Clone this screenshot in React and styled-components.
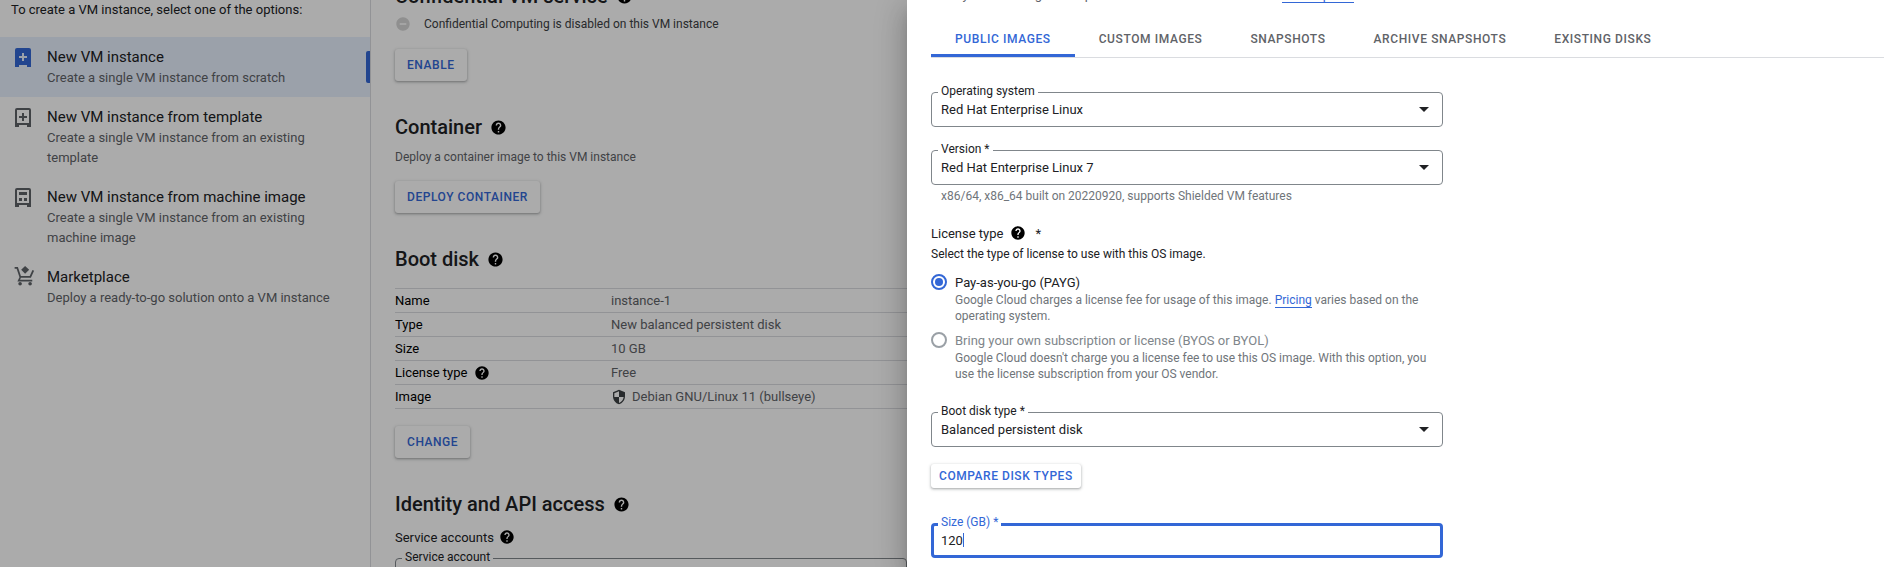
import React from "react"
import styled, { createGlobalStyle } from "styled-components"
import { MdHelp, MdRemoveCircle, MdSecurity } from "react-icons/md"

const BLUE = "#3367d6"
const INK = "#202124"
const GREY = "#5f6368"

const GlobalStyle = createGlobalStyle`
	html, body {
		margin: 0;
		height: 100%;
		overflow: hidden;
		background: #fff;
	}
	body {
		font-family: Roboto, "Liberation Sans", sans-serif;
		font-size: 12px;
		color: ${INK};
	}
	* {
		box-sizing: border-box;
	}
`

const Page = styled.div`
	display: flex;
	width: 1902px;
	height: 567px;
	overflow: hidden;
`

const Backdrop = styled.div`
	position: relative;
	display: flex;
	flex: 0 0 907px;
	height: 100%;
	background: #fff;
`

const Scrim = styled.div`
	position: absolute;
	inset: 0;
	background: rgba(0, 0, 0, 0.33);
`

const Sidebar = styled.aside`
	flex: 0 0 371px;
	border-right: 1px solid #dadce0;
`

const SidebarIntro = styled.div`
	height: 37px;
	padding-left: 11px;
	font-size: 13px;
	line-height: 20px;
`

const Option = styled.div`
	position: relative;
	display: flex;
	padding: 10px 36px 10px 15px;
	background: ${p => (p.$active ? "#e8f0fe" : "transparent")};
`

const OptionIcon = styled.svg`
	flex: 0 0 32px;
	width: 32px;
	height: 20px;
	margin-top: ${p => p.$top || 1}px;
	fill: ${p => (p.$active ? BLUE : GREY)};
	overflow: visible;
`

const OptionBody = styled.div`
	flex: 1;
`

const OptionTitle = styled.div`
	font-size: 15px;
	line-height: 20px;
`

const OptionText = styled.div`
	padding-top: 1px;
	margin-bottom: -1px;
	font-size: 13px;
	line-height: 20px;
	color: ${GREY};
`

const ActiveBar = styled.span`
	position: absolute;
	right: 0;
	top: 14px;
	width: 4px;
	height: 32px;
	border-radius: 2px 0 0 2px;
	background: ${BLUE};
`

const Main = styled.main`
	flex: 1;
	min-width: 0;
	height: 100%;
	padding-left: 24px;
	overflow: hidden;
`

// the column is scrolled, its first heading is cut by the window
const MainScroll = styled.div`
	margin-top: -16px;
`

const Heading = styled.h2`
	display: flex;
	align-items: center;
	gap: 8px;
	height: 24px;
	margin: ${p => p.$top || 0}px 0 0;
	font-size: 20px;
	font-weight: 500;
	line-height: 24px;
	color: ${INK};
`

const StatusRow = styled.div`
	display: flex;
	align-items: center;
	gap: 13px;
	height: 20px;
	margin-top: 6px;
	color: #3c4043;
`

const MutedLine = styled.div`
	margin-top: 8px;
	line-height: 20px;
	color: ${GREY};
`

const RaisedButton = styled.button`
	display: block;
	height: ${p => p.$height || 32}px;
	margin-top: ${p => p.$top || 0}px;
	padding: 0 ${p => p.$pad || 12}px;
	border: 0;
	border-radius: 3px;
	background: #fff;
	box-shadow: 0 1px 2px rgba(60, 64, 67, 0.3), 0 1px 3px 1px rgba(60, 64, 67, 0.15);
	font: 500 12px Roboto, sans-serif;
	letter-spacing: 0.55px;
	color: ${BLUE};
`

const SummaryTable = styled.div`
	margin-top: 17px;
	border-top: 1px solid #dadce0;
`

const SummaryRow = styled.div`
	display: grid;
	grid-template-columns: 216px 1fr;
	align-items: center;
	height: 24px;
	border-bottom: 1px solid #dadce0;
	font-size: 13px;
`

const SummaryKey = styled.div`
	display: flex;
	align-items: center;
	gap: 7px;
	color: #000;
`

const SummaryValue = styled.div`
	display: flex;
	align-items: center;
	gap: 5px;
	color: ${GREY};
`

const SubLabel = styled.div`
	display: flex;
	align-items: center;
	gap: 5px;
	height: 20px;
	margin-top: 11px;
	font-size: 13px;
	color: ${INK};
`

const Panel = styled.section`
	position: relative;
	flex: 1;
	height: 100%;
	padding-left: 24px;
	overflow: hidden;
	background: #fff;
	box-shadow: 0 8px 10px -5px rgba(0, 0, 0, 0.2), 0 16px 24px 2px rgba(0, 0, 0, 0.14), 0 6px 30px 5px rgba(0, 0, 0, 0.12);
`

const PanelScroll = styled.div`
	width: 953px;
	margin-top: -15px;
`

const Intro = styled.div`
	font-size: 13px;
	line-height: 20px;
	color: ${GREY};
`

const IntroLink = styled.a`
	color: ${BLUE};
	border-bottom: 1px solid ${BLUE};
`

const Tabs = styled.div`
	display: flex;
	height: 39px;
	margin-top: 14px;
	border-bottom: 1px solid #dadce0;
`

const Tab = styled.div`
	display: flex;
	align-items: center;
	height: 38px;
	padding: 4px 24px 0;
	border-bottom: 3px solid ${p => (p.$active ? BLUE : "transparent")};
	font-weight: 500;
	letter-spacing: 0.6px;
	color: ${p => (p.$active ? BLUE : GREY)};
`

const FieldBox = styled.div`
	position: relative;
	display: flex;
	align-items: center;
	justify-content: space-between;
	width: 512px;
	height: 35px;
	margin-top: ${p => p.$top || 0}px;
	padding: 0 13px 0 ${p => (p.$focused ? 7 : 9)}px;
	border: ${p => (p.$focused ? `3px solid ${BLUE}` : "1px solid #80868b")};
	border-radius: 4px;
	font-size: 13px;
	color: ${INK};
`

const FieldLabel = styled.label`
	position: absolute;
	top: ${p => (p.$focused ? -11 : -9)}px;
	left: ${p => (p.$focused ? 4 : 6)}px;
	padding: 0 3px;
	background: #fff;
	font-size: 12px;
	line-height: 14px;
	color: ${p => (p.$focused ? BLUE : INK)};
`

const Arrow = styled.span`
	width: 0;
	height: 0;
	border: 5px solid transparent;
	border-top-color: #202124;
	border-bottom: 0;
`

const Caret = styled.span`
	display: inline-block;
	width: 1px;
	height: 14px;
	vertical-align: -2px;
	background: ${BLUE};
`

const Hint = styled.div`
	margin-top: 3px;
	padding-left: 10px;
	line-height: 16px;
	color: #70757a;
`

const GroupTitle = styled.div`
	display: flex;
	align-items: center;
	gap: 7px;
	height: 20px;
	margin-top: 19px;
	font-size: 13px;
`

const GroupText = styled.div`
	margin-top: 1px;
	line-height: 20px;
`

const RadioRow = styled.div`
	display: flex;
	align-items: center;
	gap: 8px;
	width: 512px;
	height: 20px;
	margin-top: ${p => p.$top}px;
	font-size: 13px;
	color: ${p => (p.$disabled ? "#80868b" : INK)};
`

const RadioMark = styled.span`
	display: flex;
	align-items: center;
	justify-content: center;
	width: 16px;
	height: 16px;
	border: 2px solid ${p => (p.$checked ? BLUE : "#9aa0a6")};
	border-radius: 50%;

	&::after {
		content: "";
		width: 8px;
		height: 8px;
		border-radius: 50%;
		background: ${p => (p.$checked ? BLUE : "transparent")};
	}
`

const RadioText = styled.div`
	width: 511px;
	padding-left: 24px;
	line-height: 16px;
	color: #70757a;
`

const RadioLink = styled.a`
	color: ${BLUE};
	border-bottom: 1px solid ${BLUE};
`

const Required = styled.span`
	margin-left: 2px;
`

const NewInstanceIcon = ({ active }) => (
	<OptionIcon viewBox="0 0 32 20" $active={active}>
		<path d="M2 0h12a2 2 0 0 1 2 2v17h-4v-2H4v2H0V2a2 2 0 0 1 2-2zM7 5v3H4v2h3v3h2v-3h3V8H9V5z" fillRule="evenodd" />
	</OptionIcon>
)

const TemplateIcon = () => (
	<OptionIcon viewBox="0 0 32 20">
		<path d="M2 0h12a2 2 0 0 1 2 2v17h-4v-2H4v2H0V2a2 2 0 0 1 2-2zm0 2v13h12V2zM7 5h2v3h3v2H9v3H7v-3H4V8h3z" fillRule="evenodd" />
	</OptionIcon>
)

const MachineImageIcon = () => (
	<OptionIcon viewBox="0 0 32 20">
		<path d="M2 0h12a2 2 0 0 1 2 2v17h-4v-2H4v2H0V2a2 2 0 0 1 2-2zm0 2v13h12V2zM4 4h8v3H4zM4 10h3v3H4zM9 10h3v3H9z" fillRule="evenodd" />
	</OptionIcon>
)

const MarketIcon = () => (
	<OptionIcon viewBox="0 0 32 22" $top={-1}>
		<path d="M-2 1h3.600l3.300 10h9.700l3-6.500 1.800.8-3.500 7.700H4.900l-.9 2h13.400v2H1l2.300-4.600L.2 3H-2zM9.500 0l4.500 4-4.500 4.500L5.200 4z" />
		<circle cx="4" cy="19.500" r="2" />
		<circle cx="15" cy="19.500" r="2" />
	</OptionIcon>
)

const App = () => (
	<Page>
		<GlobalStyle />
		<Backdrop>
			<Sidebar>
				<SidebarIntro>To create a VM instance, select one of the options:</SidebarIntro>
				<Option $active>
					<NewInstanceIcon active />
					<OptionBody>
						<OptionTitle>New VM instance</OptionTitle>
						<OptionText>Create a single VM instance from scratch</OptionText>
					</OptionBody>
					<ActiveBar />
				</Option>
				<Option>
					<TemplateIcon />
					<OptionBody>
						<OptionTitle>New VM instance from template</OptionTitle>
						<OptionText>Create a single VM instance from an existing template</OptionText>
					</OptionBody>
				</Option>
				<Option>
					<MachineImageIcon />
					<OptionBody>
						<OptionTitle>New VM instance from machine image</OptionTitle>
						<OptionText>Create a single VM instance from an existing machine image</OptionText>
					</OptionBody>
				</Option>
				<Option>
					<MarketIcon />
					<OptionBody>
						<OptionTitle>Marketplace</OptionTitle>
						<OptionText>Deploy a ready-to-go solution onto a VM instance</OptionText>
					</OptionBody>
				</Option>
			</Sidebar>
			<Main>
				<MainScroll>
					<Heading>
						Confidential VM service <MdHelp size={17} color="#000" />
					</Heading>
					<StatusRow>
						<MdRemoveCircle size={16} color="#d5d5d5" />
						Confidential Computing is disabled on this VM instance
					</StatusRow>
					<RaisedButton $top={15}>ENABLE</RaisedButton>
					<Heading $top={34}>
						Container <MdHelp size={17} color="#000" />
					</Heading>
					<MutedLine>Deploy a container image to this VM instance</MutedLine>
					<RaisedButton $top={14}>DEPLOY CONTAINER</RaisedButton>
					<Heading $top={34}>
						Boot disk <MdHelp size={17} color="#000" />
					</Heading>
					<SummaryTable>
						<SummaryRow>
							<SummaryKey>Name</SummaryKey>
							<SummaryValue>instance-1</SummaryValue>
						</SummaryRow>
						<SummaryRow>
							<SummaryKey>Type</SummaryKey>
							<SummaryValue>New balanced persistent disk</SummaryValue>
						</SummaryRow>
						<SummaryRow>
							<SummaryKey>Size</SummaryKey>
							<SummaryValue>10 GB</SummaryValue>
						</SummaryRow>
						<SummaryRow>
							<SummaryKey>
								License type <MdHelp size={16} color="#000" />
							</SummaryKey>
							<SummaryValue>Free</SummaryValue>
						</SummaryRow>
						<SummaryRow>
							<SummaryKey>Image</SummaryKey>
							<SummaryValue>
								<MdSecurity size={16} color="#3c4043" />
								Debian GNU/Linux 11 (bullseye)
							</SummaryValue>
						</SummaryRow>
					</SummaryTable>
					<RaisedButton $top={17}>CHANGE</RaisedButton>
					<Heading $top={34}>
						Identity and API access <MdHelp size={17} color="#000" />
					</Heading>
					<SubLabel>
						Service accounts <MdHelp size={16} color="#000" />
					</SubLabel>
					<FieldBox $top={11}>
						<FieldLabel>Service account</FieldLabel>
					</FieldBox>
				</MainScroll>
			</Main>
			<Scrim />
		</Backdrop>
		<Panel>
			<PanelScroll>
				<Intro>
					what you're looking for? Explore hundreds of VM solutions in <IntroLink>Marketplace</IntroLink>
				</Intro>
				<Tabs>
					<Tab $active>PUBLIC IMAGES</Tab>
					<Tab>CUSTOM IMAGES</Tab>
					<Tab>SNAPSHOTS</Tab>
					<Tab>ARCHIVE SNAPSHOTS</Tab>
					<Tab>EXISTING DISKS</Tab>
				</Tabs>
				<FieldBox $top={34}>
					<FieldLabel>Operating system</FieldLabel>
					Red Hat Enterprise Linux
					<Arrow />
				</FieldBox>
				<FieldBox $top={23}>
					<FieldLabel>Version *</FieldLabel>
					Red Hat Enterprise Linux 7
					<Arrow />
				</FieldBox>
				<Hint>x86/64, x86_64 built on 20220920, supports Shielded VM features</Hint>
				<GroupTitle>
					License type <MdHelp size={16} color="#000" /> <Required>*</Required>
				</GroupTitle>
				<GroupText>Select the type of license to use with this OS image.</GroupText>
				<RadioRow $top={8}>
					<RadioMark $checked />
					Pay-as-you-go (PAYG)
				</RadioRow>
				<RadioText>
					Google Cloud charges a license fee for usage of this image. <RadioLink>Pricing</RadioLink> varies based on
					the operating system.
				</RadioText>
				<RadioRow $top={6} $disabled>
					<RadioMark />
					Bring your own subscription or license (BYOS or BYOL)
				</RadioRow>
				<RadioText>
					Google Cloud doesn't charge you a license fee to use this OS image. With this option, you use the license
					subscription from your OS vendor.
				</RadioText>
				<FieldBox $top={30}>
					<FieldLabel>Boot disk type *</FieldLabel>
					Balanced persistent disk
					<Arrow />
				</FieldBox>
				<RaisedButton $top={17} $height={24} $pad={8}>
					COMPARE DISK TYPES
				</RaisedButton>
				<FieldBox $top={35} $focused>
					<FieldLabel $focused>Size (GB) *</FieldLabel>
					<span>
						120
						<Caret />
					</span>
				</FieldBox>
			</PanelScroll>
		</Panel>
	</Page>
)

export default App
